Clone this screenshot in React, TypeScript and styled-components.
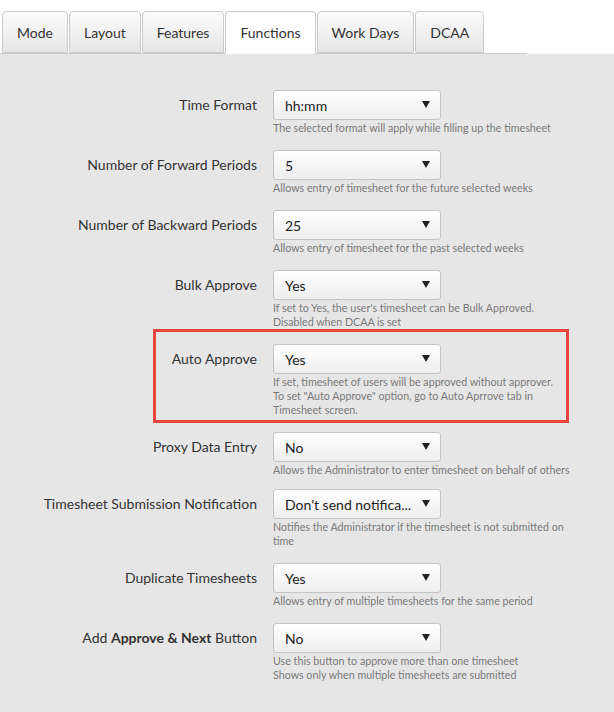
import React from "react";
import styled, { createGlobalStyle } from "styled-components";

const GlobalStyle = createGlobalStyle`
  html, body {
    margin: 0;
    padding: 0;
    background: #ffffff;
  }
  body {
    font-family: Lato, "Open Sans", "Liberation Sans", sans-serif;
    color: #333333;
  }
`;

const Page = styled.div`
  width: 614px;
  min-height: 712px;
  display: flex;
  flex-direction: column;
`;

const TabBar = styled.div`
  display: flex;
  align-items: flex-end;
  gap: 1px;
  width: 525px;
  padding: 11px 0 0 2px;
  border-bottom: 1px solid #cccccc;
`;

const Tab = styled.div<{ $active?: boolean }>`
  box-sizing: border-box;
  height: ${(p) => (p.$active ? 43 : 42)}px;
  margin-bottom: ${(p) => (p.$active ? -1 : 0)}px;
  padding: 0 14px ${(p) => (p.$active ? 1 : 0)}px;
  display: flex;
  align-items: center;
  font-size: 14px;
  color: #333333;
  border: 1px solid #cccccc;
  border-bottom: ${(p) => (p.$active ? "none" : "1px solid #cccccc")};
  border-radius: 4px 4px 0 0;
  background: ${(p) =>
    p.$active ? "#ffffff" : "linear-gradient(#fbfbfb, #e6e6e6)"};
`;

const Panel = styled.div`
  flex: 1;
  background: #e6e6e6;
  padding-top: 36px;
`;

const Row = styled.div<{ $highlight?: boolean; $gap?: number }>`
  position: relative;
  display: grid;
  grid-template-columns: 257px 168px;
  column-gap: 16px;
  margin-bottom: ${(p) => p.$gap ?? 15}px;

  ${(p) =>
    p.$highlight &&
    `
    &::after {
      content: "";
      position: absolute;
      left: 153px;
      top: -15px;
      width: 416px;
      height: 94px;
      box-sizing: border-box;
      border: 3px solid #e8473f;
      pointer-events: none;
    }
  `}
`;

const Label = styled.div`
  grid-column: 1;
  height: 29px;
  display: flex;
  align-items: center;
  justify-content: flex-end;
  font-size: 14px;
  color: #333333;
  white-space: nowrap;

  b {
    font-weight: 700;
    white-space: pre;
  }
`;

const Field = styled.div`
  grid-column: 2;
  display: flex;
  flex-direction: column;
`;

const Select = styled.div`
  box-sizing: border-box;
  width: 168px;
  height: 30px;
  padding: 0 10px 0 11px;
  display: flex;
  align-items: center;
  justify-content: space-between;
  border: 1px solid #c4c4c4;
  border-radius: 3px;
  background: linear-gradient(#ffffff, #eeeeee);
  font-size: 14px;
  color: #222222;
`;

const Arrow = styled.span`
  width: 0;
  height: 0;
  border-left: 4px solid transparent;
  border-right: 4px solid transparent;
  border-top: 7px solid #222222;
  margin-bottom: 1px;
`;

const Help = styled.div`
  width: 320px;
  margin-top: 1px;
  font-size: 10.7px;
  line-height: 14px;
  color: #7a7a7a;
  white-space: nowrap;
`;

type RowData = {
  label: React.ReactNode;
  value: string;
  help: string[];
  highlight?: boolean;
  gap?: number;
};

const rows: RowData[] = [
  {
    label: "Time Format",
    value: "hh:mm",
    help: ["The selected format will apply while filling up the timesheet"],
  },
  {
    label: "Number of Forward Periods",
    value: "5",
    help: ["Allows entry of timesheet for the future selected weeks"],
  },
  {
    label: "Number of Backward Periods",
    value: "25",
    help: ["Allows entry of timesheet for the past selected weeks"],
  },
  {
    label: "Bulk Approve",
    value: "Yes",
    help: [
      "If set to Yes, the user's timesheet can be Bulk Approved.",
      "Disabled when DCAA is set",
    ],
  },
  {
    label: "Auto Approve",
    value: "Yes",
    highlight: true,
    help: [
      "If set, timesheet of users will be approved without approver.",
      'To set "Auto Approve" option, go to Auto Aprrove tab in',
      "Timesheet screen.",
    ],
  },
  {
    label: "Proxy Data Entry",
    value: "No",
    gap: 12,
    help: ["Allows the Administrator to enter timesheet on behalf of others"],
  },
  {
    label: "Timesheet Submission Notification",
    value: "Don't send notifica...",
    help: [
      "Notifies the Administrator if the timesheet is not submitted on",
      "time",
    ],
  },
  {
    label: "Duplicate Timesheets",
    value: "Yes",
    help: ["Allows entry of multiple timesheets for the same period"],
  },
  {
    label: (
      <>
        Add&nbsp;<b>Approve &amp; Next</b>&nbsp;Button
      </>
    ),
    value: "No",
    help: [
      "Use this button to approve more than one timesheet",
      "Shows only when multiple timesheets are submitted",
    ],
  },
];

const tabs = ["Mode", "Layout", "Features", "Functions", "Work Days", "DCAA"];

export default function App() {
  return (
    <Page>
      <GlobalStyle />
      <TabBar>
        {tabs.map((t) => (
          <Tab key={t} $active={t === "Functions"}>
            {t}
          </Tab>
        ))}
      </TabBar>
      <Panel>
        {rows.map((r, i) => (
          <Row key={i} $highlight={r.highlight} $gap={r.gap}>
            <Label>{r.label}</Label>
            <Field>
              <Select>
                <span>{r.value}</span>
                <Arrow />
              </Select>
              <Help>
                {r.help.map((h, j) => (
                  <div key={j}>{h}</div>
                ))}
              </Help>
            </Field>
          </Row>
        ))}
      </Panel>
    </Page>
  );
}
